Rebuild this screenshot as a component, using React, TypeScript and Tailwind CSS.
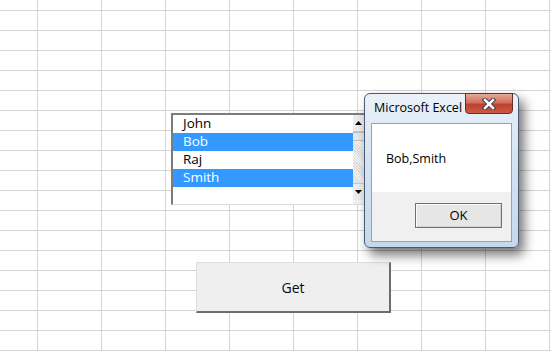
import { FC } from "react";

const COLS = 10;
const ROWS = 19;

const names = [
  { label: "John", selected: false },
  { label: "Bob", selected: true },
  { label: "Raj", selected: false },
  { label: "Smith", selected: true },
];

const SheetGrid: FC = () => {
  const cells = [];
  for (let r = 0; r < ROWS; r++) {
    for (let c = 0; c < COLS; c++) {
      cells.push(
        <div key={`${r}-${c}`} className="border-r border-b border-[#d4d4d4]" />
      );
    }
  }
  return (
    <div className="grid grid-cols-[38px_repeat(9,64px)] grid-rows-[11px_repeat(18,20px)]">
      {cells}
    </div>
  );
};

const ListBox: FC = () => {
  return (
    <div className="absolute left-[171px] top-[113px] flex h-[92px] w-[195px] border-t-2 border-l-2 border-b border-[#7c7c7c] border-b-[#dcdcdc] bg-white">
      <div className="flex flex-1 flex-col">
        {names.map((row, index) => (
          <div
            key={index}
            className={`flex h-[18px] items-center pl-[10px] text-[13.5px] leading-none ${
              row.selected ? "bg-[#3399ff] text-white" : "text-black"
            }`}
          >
            {row.label}
          </div>
        ))}
      </div>
      <div className="flex w-[13px] flex-col border-r-2 border-[#5a5a5a] bg-[#f0f0f0]">
        <div className="flex h-[17px] items-center justify-center border-b border-[#c9c9c9] bg-[#ececec]">
          <svg width="7" height="4" viewBox="0 0 7 4">
            <path d="M3.5 0 L7 4 L0 4 Z" fill="#000" />
          </svg>
        </div>
        <div className="h-[9px] border-y border-[#bcbcbc] bg-[#e6e6e6]" />
        <div className="flex-1 bg-[repeating-linear-gradient(45deg,#dcdcdc_0px,#dcdcdc_1px,#f4f4f4_1px,#f4f4f4_2px)]" />
        <div className="flex h-[17px] items-center justify-center border-t border-[#c9c9c9] bg-[#ececec]">
          <svg width="7" height="4" viewBox="0 0 7 4">
            <path d="M0 0 L7 0 L3.5 4 Z" fill="#000" />
          </svg>
        </div>
        <div className="h-[4px] bg-[#f0f0f0]" />
      </div>
    </div>
  );
};

const CloseButton: FC = () => {
  return (
    <div className="absolute right-[5px] top-[-1px] flex h-[21px] w-[48px] items-center justify-center rounded-b-[4px] border border-[#6b2a22] bg-[linear-gradient(#e9a999_0%,#d0705e_45%,#c0412d_55%,#c95a45_100%)]">
      <svg width="14" height="12" viewBox="0 0 14 12">
        <path d="M3 2 L11 10 M11 2 L3 10" stroke="#3b3b4a" strokeWidth="4.5" strokeLinecap="square" />
        <path d="M3 2 L11 10 M11 2 L3 10" stroke="#ffffff" strokeWidth="2.5" strokeLinecap="square" />
      </svg>
    </div>
  );
};

const MessageBox: FC = () => {
  return (
    <div className="absolute left-[364px] top-[93px] h-[155px] w-[155px] rounded-[6px] border border-[#485b70] bg-[linear-gradient(#eaf1f9_0%,#d6e4f2_40%,#c6d8ec_100%)] shadow-[5px_7px_12px_rgba(0,0,0,0.55)]">
      <CloseButton />
      <div className="flex h-[29px] items-center pl-[9px] text-[12.5px] text-black">
        Microsoft Excel
      </div>
      <div className="mx-[6px] flex h-[119px] flex-col border border-[#8fa3ba]">
        <div className="flex h-[68px] items-center bg-white pl-[14px] pt-[2px] text-[12.5px] text-black">
          Bob,Smith
        </div>
        <div className="flex flex-1 items-start justify-end bg-[#f0f0f0] pr-[9px] pt-[11px]">
          <div className="flex h-[25px] w-[87px] items-center justify-center border border-[#707070] bg-[#e6e6e6] text-[13px] text-black shadow-[inset_1px_1px_0_#fbfbfb,inset_-1px_-1px_0_#d3d3d3]">
            OK
          </div>
        </div>
      </div>
    </div>
  );
};

const App: FC = () => {
  return (
    <div className="relative h-[351px] w-[551px] overflow-hidden bg-white font-['Open_Sans','Noto_Sans',sans-serif]">
      <SheetGrid />
      <ListBox />
      <div className="absolute left-[196px] top-[262px] flex h-[51px] w-[195px] items-center justify-center border-t border-l border-[#dedede] border-b-2 border-r-2 border-b-[#6d6d6d] border-r-[#6d6d6d] bg-[#efefef] text-[14px] text-[#0a0a1e]">
        Get
      </div>
      <MessageBox />
    </div>
  );
};

export default App;
